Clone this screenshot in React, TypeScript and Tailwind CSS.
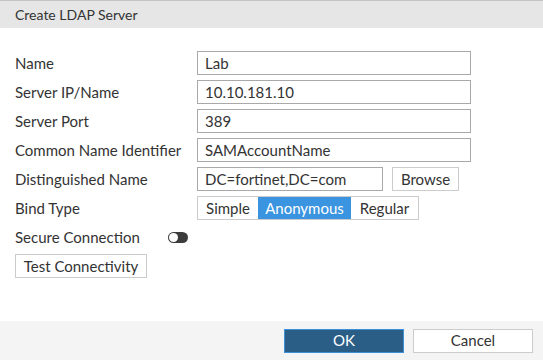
import React from "react";

const Label = ({ children }: { children: React.ReactNode }) => (
  <div className="w-[182px] shrink-0 text-[15px] text-[#333]">{children}</div>
);

const Input = ({ value, w = "w-[274px]" }: { value: string; w?: string }) => (
  <div className={`${w} h-[24px] border border-[#a9a9a9] bg-white px-[7px] flex items-center text-[15px] text-[#333]`}>
    {value}
  </div>
);

export default function App() {
  return (
    <div
      className="w-[543px] h-[360px] flex flex-col bg-white text-[#333]"
      style={{ fontFamily: "Lato, 'Open Sans', sans-serif" }}
    >
      <div className="h-[28px] shrink-0 border-t border-[#c4c4c4] bg-[#e6e6e6] flex items-center px-[15px] text-[14px] text-[#333]">
        Create LDAP Server
      </div>
      <div className="flex-1 flex flex-col gap-[5px] px-[15px] pt-[23px]">
        <div className="flex items-center h-[24px]">
          <Label>Name</Label>
          <Input value="Lab" />
        </div>
        <div className="flex items-center h-[24px]">
          <Label>Server IP/Name</Label>
          <Input value="10.10.181.10" />
        </div>
        <div className="flex items-center h-[24px]">
          <Label>Server Port</Label>
          <Input value="389" />
        </div>
        <div className="flex items-center h-[24px]">
          <Label>Common Name Identifier</Label>
          <Input value="SAMAccountName" />
        </div>
        <div className="flex items-center h-[24px]">
          <Label>Distinguished Name</Label>
          <Input value="DC=fortinet,DC=com" w="w-[186px]" />
          <div className="ml-[9px] h-[24px] w-[67px] border border-[#cccccc] bg-white flex items-center justify-center text-[15px]">
            Browse
          </div>
        </div>
        <div className="flex items-center h-[24px]">
          <Label>Bind Type</Label>
          <div className="flex h-[24px] border border-[#cccccc]">
            <div className="w-[60px] flex items-center justify-center text-[15px] bg-white">Simple</div>
            <div className="w-[93px] flex items-center justify-center text-[15px] bg-[#3a94df] text-white">Anonymous</div>
            <div className="w-[67px] flex items-center justify-center text-[15px] bg-white">Regular</div>
          </div>
        </div>
        <div className="flex items-center h-[24px]">
          <div className="w-[153px] shrink-0 text-[15px]">Secure Connection</div>
          <div className="relative w-[20px] h-[11px] rounded-full bg-[#3c3c3c]">
            <div className="absolute left-[1px] top-[1px] w-[9px] h-[9px] rounded-full bg-white" />
          </div>
        </div>
        <div className="flex items-center h-[24px]">
          <div className="h-[24px] w-[132px] border border-[#cccccc] bg-white flex items-center justify-center text-[15px]">
            Test Connectivity
          </div>
        </div>
      </div>
      <div className="h-[39px] shrink-0 bg-[#f4f4f4] flex items-center justify-end gap-[9px] pr-[10px]">
        <div className="w-[120px] h-[24px] border border-[#3d8fd8] bg-[#2a5e87] text-white flex items-center justify-center text-[15px]">
          OK
        </div>
        <div className="w-[120px] h-[24px] border border-[#cccccc] bg-white flex items-center justify-center text-[15px] text-[#333]">
          Cancel
        </div>
      </div>
    </div>
  );
}
